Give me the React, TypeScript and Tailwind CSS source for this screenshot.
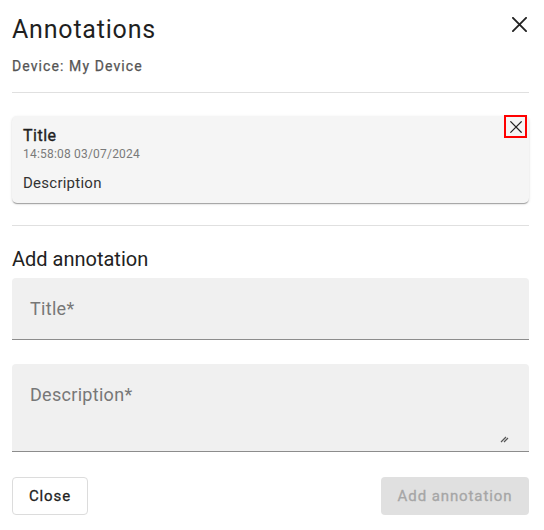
const font = "font-['Roboto','Liberation_Sans',sans-serif]";

function CloseIcon({ size, stroke }: { size: number; stroke: number }) {
	return (
		<svg width={size} height={size} viewBox="0 0 16 16" fill="none">
			<path
				d="M1 1 15 15M15 1 1 15"
				stroke="#222"
				strokeWidth={stroke}
				strokeLinecap="square"
			/>
		</svg>
	);
}

function ResizeHandle() {
	return (
		<svg width="9" height="7" viewBox="0 0 9 7" fill="none">
			<path d="M1 6 6 1M4 6 8 2" stroke="#555" strokeWidth="1.2" />
		</svg>
	);
}

export default function App() {
	return (
		<div className={`${font} w-[544px] h-[530px] bg-white text-[#1f1f1f] px-3`}>
			<div className="flex justify-between items-start pt-[14px] w-[520px]">
				<h2 className="text-[25px] leading-[32px] tracking-[0.8px]">Annotations</h2>
				<button className="mt-[3px] mr-[5px] w-[15px] h-[15px] flex items-center justify-center">
					<CloseIcon size={15} stroke={2} />
				</button>
			</div>
			<div className="mt-[10px] text-[14px] leading-[20px] tracking-[1.1px] text-[#555] [-webkit-text-stroke:0.25px_#555]">
				Device: My Device
			</div>
			<div className="mt-[16px] h-px bg-[#e0e0e0] w-[517px]" />

			<div className="mt-[23px] w-[517px] h-[87px] rounded-[5px] bg-[#f5f5f5] shadow-[0_2px_1px_-1px_rgba(0,0,0,0.2),0_1px_1px_0_rgba(0,0,0,0.14),0_1px_3px_0_rgba(0,0,0,0.12)] flex justify-between pl-[11px] pr-[2px]">
				<div className="pt-[10px]">
					<div className="text-[16px] leading-[20px] tracking-[0.5px] [-webkit-text-stroke:0.35px_#1f1f1f]">Title</div>
					<div className="text-[12px] leading-[16px] tracking-[0.2px] text-[#7a7a7a]">14:58:08 03/07/2024</div>
					<div className="mt-[11px] text-[15px] leading-[20px] tracking-[0.25px] text-[#333]">Description</div>
				</div>
				<button className="mt-[-1px] w-[23px] h-[23px] border-2 border-[#ff0000] flex items-center justify-center">
					<CloseIcon size={12} stroke={1.6} />
				</button>
			</div>

			<div className="mt-[22px] h-px bg-[#e0e0e0] w-[517px]" />
			<h3 className="mt-[19px] text-[20px] leading-[28px] text-[#222]">Add annotation</h3>

			<div className="mt-[5px] w-[517px] h-[62px] rounded-t-[4px] bg-[#f0f0f0] border-b border-[#8c8c8c] flex items-center px-[18px]">
				<span className="text-[18px] text-[#777] tracking-[0.3px]">Title*</span>
			</div>

			<div className="mt-[24px] w-[517px] h-[88px] rounded-t-[4px] bg-[#f0f0f0] border-b border-[#8c8c8c] flex flex-col px-[18px] pt-[20px]">
				<span className="text-[18px] leading-[22px] text-[#777] tracking-[0.3px]">Description*</span>
				<div className="mt-auto mb-[8px] self-end mr-[2px]">
					<ResizeHandle />
				</div>
			</div>

			<div className="mt-[25px] w-[517px] flex justify-between">
				<button className="w-[76px] h-[38px] rounded-[4px] border border-[#dcdcdc] bg-white text-[15px] tracking-[0.9px] text-[#222] [-webkit-text-stroke:0.3px_#222]">
					Close
				</button>
				<button className="w-[148px] h-[38px] rounded-[4px] bg-[#e0e0e0] text-[15px] tracking-[0.9px] text-[#a6a6a6] [-webkit-text-stroke:0.3px_#a6a6a6]">
					Add annotation
				</button>
			</div>
		</div>
	);
}
